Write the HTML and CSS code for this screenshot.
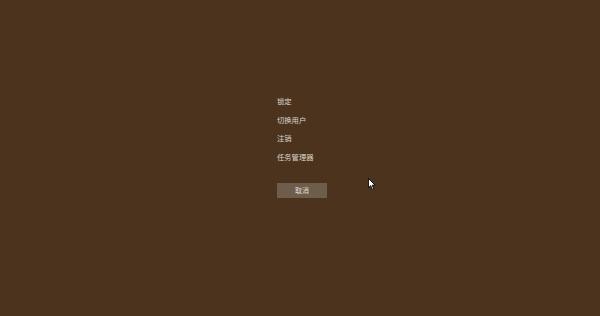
FILE: index.html
```html
<!DOCTYPE html>
<html lang="zh-CN">
<head>
<meta charset="utf-8">
<link rel="stylesheet" href="styles.css">
</head>
<body>
<div class="screen">
  <div class="menu">
    <div class="item">锁定</div>
    <div class="item">切换用户</div>
    <div class="item">注销</div>
    <div class="item">任务管理器</div>
    <div class="cancel">取消</div>
  </div>
  <svg class="cursor" width="8" height="12.5" viewBox="0 0 9 14">
    <path d="M0.5 0.5 L0.5 11 L3 8.6 L4.8 12.8 L6.4 12.1 L4.7 8 L8 8 Z" fill="#fff" stroke="#000" stroke-width="1" stroke-linejoin="miter"/>
  </svg>
</div>
</body>
</html>
```
FILE: styles.css
```css
html, body {
  margin: 0;
  padding: 0;
}
body {
  background: #4b331d;
  font-family: "Noto Sans CJK SC", "Noto Sans", sans-serif;
}
.screen {
  position: relative;
  width: 600px;
  height: 316px;
  overflow: hidden;
}
.menu {
  display: flex;
  flex-direction: column;
  align-items: flex-start;
  padding: 92px 0 0 277px;
}
.item {
  font-size: 7.3px;
  line-height: 18.7px;
  height: 18.7px;
  color: #ddd6cf;
}
.cancel {
  margin-top: 16.2px;
  width: 50px;
  height: 15px;
  background: #6f5d4c;
  color: #e2dcd6;
  font-size: 7px;
  line-height: 15px;
  text-align: center;
}
.cursor {
  position: absolute;
  left: 368px;
  top: 177.5px;
}
```
